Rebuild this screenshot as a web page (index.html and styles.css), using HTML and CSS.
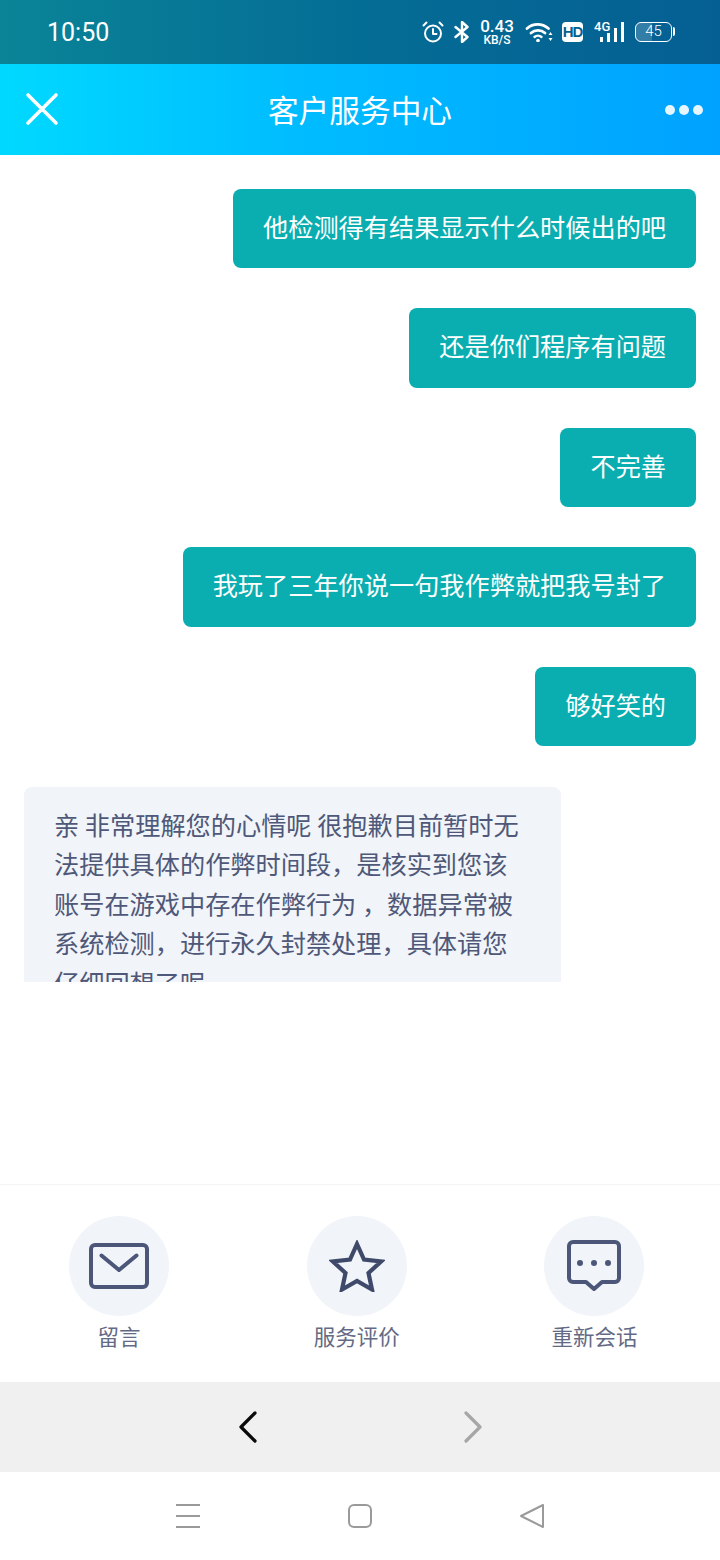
FILE: index.html
```html
<!DOCTYPE html>
<html lang="zh-CN">
<head>
    <meta charset="UTF-8">
    <meta name="viewport" content="width=device-width, initial-scale=1.0">
    <title>客户服务中心</title>
    <link rel="stylesheet" href="styles.css">
</head>
<body>
<div class="top">
    <div class="status">
        <span class="time">10:50</span>
        <div class="status-icons">
            <svg class="ic-alarm" width="22" height="22" viewBox="0 0 22 22" fill="none" stroke="#fff" stroke-width="2" stroke-linecap="round" stroke-linejoin="round">
                <circle cx="11" cy="12.5" r="8"/>
                <path d="M11 8v5h3.5M1.5 4.5L4.5 1.5M20.5 4.5L17.5 1.5"/>
            </svg>
            <svg class="ic-bt" width="16" height="22" viewBox="0 0 16 22" fill="none" stroke="#fff" stroke-width="2.4" stroke-linejoin="round" stroke-linecap="round">
                <path d="M1.5 6l12 10-5.5 5V1l5.5 5-12 10"/>
            </svg>
            <div class="speed">
                <span class="speed-num">0.43</span>
                <span class="speed-unit">KB/S</span>
            </div>
            <svg class="ic-wifi" width="28" height="20" viewBox="0 0 28 20" fill="none" stroke="#fff" stroke-width="2.800" stroke-linecap="round">
                <path d="M2 6.500C8 1 17 1 23.500 6.500M6 11c4-3.500 10-3.500 14 0"/>
                <path d="M9.500 15c2-1.800 5-1.800 7 0" stroke-width="2.400"/>
                <circle cx="13" cy="18.500" r="1.800" fill="#fff" stroke="none"/>
                <path d="M25.500 10l-2 3h4zM25.500 19l-2-3h4z" fill="#fff" stroke="none"/>
            </svg>
            <span class="hd">HD</span>
            <div class="signal">
                <span class="net">4G</span>
                <i class="bar b1"></i><i class="bar b2"></i><i class="bar b3"></i><i class="bar b4"></i>
            </div>
            <div class="battery"><span>45</span></div>
        </div>
    </div>
    <header class="title-bar">
        <svg width="34" height="34" viewBox="0 0 34 34" fill="none" stroke="#fff" stroke-width="3.600" stroke-linecap="round">
            <path d="M3 3l28 28M31 3L3 31"/>
        </svg>
        <h1>客户服务中心</h1>
        <div class="dots"><i></i><i></i><i></i></div>
    </header>
</div>

<main class="chat">
    <div class="msg me">他检测得有结果显示什么时候出的吧</div>
    <div class="msg me">还是你们程序有问题</div>
    <div class="msg me">不完善</div>
    <div class="msg me">我玩了三年你说一句我作弊就把我号封了</div>
    <div class="msg me">够好笑的</div>
    <div class="msg them">亲 非常理解您的心情呢 很抱歉目前暂时无法提供具体的作弊时间段，是核实到您该账号在游戏中存在作弊行为 ，数据异常被系统检测，进行永久封禁处理，具体请您仔细回想了呢</div>
</main>
<div class="spacer"></div>

<section class="actions">
    <div class="action">
        <div class="circle">
            <svg width="60" height="46" viewBox="0 0 60 46" fill="none" stroke="#4b5679" stroke-width="4" stroke-linecap="round" stroke-linejoin="round">
                <rect x="2" y="2" width="56" height="42" rx="4"/>
                <path d="M12.500 12.500L30 27l17.500-14.500"/>
            </svg>
        </div>
        <span>留言</span>
    </div>
    <div class="action">
        <div class="circle">
            <svg width="56" height="52" viewBox="0 0 56 52" fill="none" stroke="#3f4a6b" stroke-width="4.200" stroke-linejoin="miter">
                <path d="M28 4l7 15.500 17 2-12.500 11.500 3.500 16.500L28 41l-15 8.500 3.500-16.500L4 21.500l17-2z"/>
            </svg>
        </div>
        <span>服务评价</span>
    </div>
    <div class="action">
        <div class="circle">
            <svg width="54" height="52" viewBox="0 0 54 52" fill="none" stroke="#4b5679" stroke-width="4" stroke-linejoin="round">
                <path d="M6 2h42a4 4 0 0 1 4 4v32a4 4 0 0 1-4 4H35l-8 7-8-7H6a4 4 0 0 1-4-4V6a4 4 0 0 1 4-4z"/>
                <circle cx="13" cy="23" r="3" fill="#4b5679" stroke="none"/>
                <circle cx="27" cy="23" r="3" fill="#4b5679" stroke="none"/>
                <circle cx="41" cy="23" r="3" fill="#4b5679" stroke="none"/>
            </svg>
        </div>
        <span>重新会话</span>
    </div>
</section>

<div class="browser-bar">
    <svg width="20" height="32" viewBox="0 0 20 32" fill="none" stroke="#0a0a0a" stroke-width="3.200" stroke-linecap="round" stroke-linejoin="round">
        <path d="M17 2L3 16l14 14"/>
    </svg>
    <svg width="20" height="32" viewBox="0 0 20 32" fill="none" stroke="#a6a6a6" stroke-width="3.200" stroke-linecap="round" stroke-linejoin="round">
        <path d="M3 2l14 14L3 30"/>
    </svg>
</div>

<nav class="sys-nav">
    <svg width="24" height="24" viewBox="0 0 24 24" fill="none" stroke="#9a9a9a" stroke-width="2">
        <path d="M0 1h24M0 12h24M0 23h24"/>
    </svg>
    <svg width="24" height="24" viewBox="0 0 24 24" fill="none" stroke="#9a9a9a" stroke-width="2">
        <rect x="1" y="1" width="22" height="22" rx="5"/>
    </svg>
    <svg width="24" height="24" viewBox="0 0 24 24" fill="none" stroke="#9a9a9a" stroke-width="2" stroke-linejoin="round">
        <path d="M23 1v22L1 12z"/>
    </svg>
</nav>
</body>
</html>
```

FILE: styles.css
```css
* {
  box-sizing: border-box;
}

html,
body {
  margin: 0;
  height: 1560px;
}

body {
  width: 720px;
  display: flex;
  flex-direction: column;
  overflow: hidden;
  background-color: #fff;
  font-family: "Noto Sans CJK SC", "Noto Sans", sans-serif;
}

.top {
  flex: none;
}

.status {
  height: 64px;
  display: flex;
  align-items: center;
  justify-content: space-between;
  padding-left: 47px;
  padding-right: 46px;
  color: #fff;
  background: linear-gradient(90deg, #0a8497 0%, #046d95 50%, #055f93 100%);
}

.time {
  font-family: Roboto, sans-serif;
  font-size: 25px;
}

.status-icons {
  display: flex;
  align-items: center;
}

.ic-alarm {
  margin-right: 10px;
}

.ic-bt {
  margin-right: 10px;
}

.speed {
  width: 34px;
  margin-right: 11px;
  display: flex;
  flex-direction: column;
  align-items: center;
  font-family: Roboto, sans-serif;
  font-weight: 500;
}

.speed-num {
  font-size: 17px;
  line-height: 15px;
}

.speed-unit {
  font-size: 12px;
  line-height: 12px;
}

.ic-wifi {
  margin-right: 9px;
}

.hd {
  width: 21px;
  height: 20px;
  margin-right: 11px;
  border-radius: 4px;
  background-color: #fff;
  color: #05608f;
  font-family: "Liberation Sans", sans-serif;
  font-size: 15px;
  font-weight: 700;
  letter-spacing: -1px;
  line-height: 20px;
  text-align: center;
}

.signal {
  position: relative;
  width: 30px;
  height: 20px;
  margin-right: 11px;
  display: flex;
  align-items: flex-end;
  justify-content: flex-end;
  gap: 4px;
}

.net {
  position: absolute;
  left: 0;
  top: -2px;
  font-family: Roboto, sans-serif;
  font-size: 13px;
  font-weight: 500;
  line-height: 14px;
}

.bar {
  width: 3px;
  background-color: #fff;
}

.b1 {
  height: 5px;
}

.b2 {
  height: 9px;
}

.b3 {
  height: 14px;
}

.b4 {
  height: 20px;
}

.battery {
  position: relative;
  width: 37px;
  height: 20px;
  margin-right: 2px;
  border: 1.500px solid #fff;
  border-radius: 6px;
  background: linear-gradient(90deg, rgba(255, 255, 255, 0.18) 45%, transparent 45%);
  font-family: Roboto, sans-serif;
  font-size: 15px;
  font-weight: 300;
  line-height: 17px;
  text-align: center;
}

.battery::after {
  content: "";
  position: absolute;
  right: -4px;
  top: 4px;
  width: 2px;
  height: 9px;
  border-radius: 0 2px 2px 0;
  background-color: #fff;
}

.title-bar {
  position: relative;
  height: 90.500px;
  display: flex;
  align-items: center;
  justify-content: space-between;
  padding-left: 25px;
  padding-right: 17px;
  background: linear-gradient(90deg, #00d9ff 0%, #00bdff 40%, #00a2ff 100%);
}

.title-bar h1 {
  margin: 0;
  position: absolute;
  left: 0;
  right: 0;
  text-align: center;
  color: #fff;
  font-size: 30.700px;
  font-weight: 400;
  line-height: 40px;
}

.dots {
  display: flex;
  gap: 4px;
  margin-top: 1px;
}

.dots i {
  display: block;
  width: 10px;
  height: 10px;
  border-radius: 50%;
  background-color: #fff;
  opacity: 0.9;
}

/* message list, cut off mid bubble */
.chat {
  flex: none;
  height: 827.800px;
  overflow: hidden;
  display: flex;
  flex-direction: column;
  gap: 40px;
  padding: 34.400px 24px 0;
}

.msg {
  flex: none;
  padding: 18px 30px 22px;
  border-radius: 8px;
  font-size: 25.200px;
  line-height: 39.500px;
}

.me {
  align-self: flex-end;
  color: #fff;
  background-color: #0aaeb0;
}

.them {
  align-self: flex-start;
  width: 537px;
  margin-top: 0.400px;
  color: #4f5878;
  background-color: #f1f4f8;
}

.spacer {
  flex: 1;
}

.actions {
  flex: none;
  height: 198px;
  display: grid;
  grid-template-columns: repeat(3, 1fr);
  padding-top: 31px;
  padding-right: 6.700px;
  border-top: 1px solid #f4f4f4;
}

.action {
  display: flex;
  flex-direction: column;
  align-items: center;
  color: #636a85;
  font-size: 21.500px;
  line-height: 32px;
}

.circle {
  width: 100px;
  height: 100px;
  margin-bottom: 4px;
  display: flex;
  align-items: center;
  justify-content: center;
  border-radius: 50%;
  background-color: #f1f4f8;
}

.browser-bar {
  flex: none;
  height: 89.500px;
  display: flex;
  align-items: center;
  justify-content: center;
  gap: 205px;
  background-color: #f0f0f0;
}

.sys-nav {
  flex: none;
  height: 88.500px;
  display: flex;
  align-items: center;
  justify-content: center;
  gap: 148px;
  background-color: #fff;
}
```
